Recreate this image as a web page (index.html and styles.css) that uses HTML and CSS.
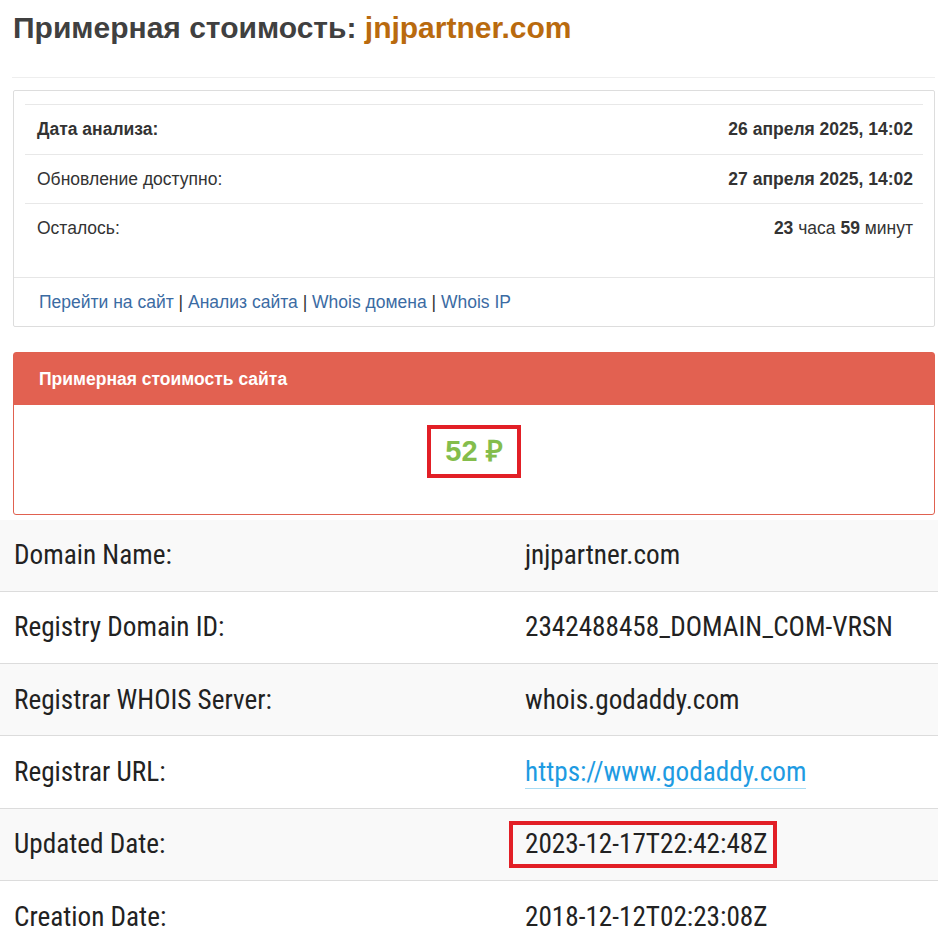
FILE: index.html
```html
<!DOCTYPE html>
<html lang="ru">
<head>
<meta charset="utf-8">
<title>Примерная стоимость: jnjpartner.com</title>
<link rel="stylesheet" href="styles.css">
</head>
<body>
<div class="top">
  <h1 class="title">Примерная стоимость: <span class="domain">jnjpartner.com</span></h1>
  <hr class="sep">
  <div class="box">
    <div class="box-body">
      <div class="row"><span class="b">Дата анализа:</span><span class="b">26 апреля 2025, 14:02</span></div>
      <div class="row"><span>Обновление доступно:</span><span class="b">27 апреля 2025, 14:02</span></div>
      <div class="row"><span>Осталось:</span><span><b>23</b> часа <b>59</b> минут</span></div>
    </div>
    <div class="box-footer">
      <a href="#">Перейти на сайт</a> | <a href="#">Анализ сайта</a> | <a href="#">Whois домена</a> | <a href="#">Whois IP</a>
    </div>
  </div>
  <div class="panel">
    <div class="panel-head">Примерная стоимость сайта</div>
    <div class="panel-body"><span class="price">52 ₽</span></div>
  </div>
</div>
<div class="whois">
  <div class="wrow odd"><div class="wl">Domain Name:</div><div class="wv">jnjpartner.com</div></div>
  <div class="wrow"><div class="wl">Registry Domain ID:</div><div class="wv">2342488458_DOMAIN_COM-VRSN</div></div>
  <div class="wrow odd"><div class="wl">Registrar WHOIS Server:</div><div class="wv">whois.godaddy.com</div></div>
  <div class="wrow"><div class="wl">Registrar URL:</div><div class="wv"><a class="wlink" href="#">https://www.godaddy.com</a></div></div>
  <div class="wrow odd"><div class="wl">Updated Date:</div><div class="wv"><span class="mark">2023-12-17T22:42:48Z</span></div></div>
  <div class="wrow"><div class="wl">Creation Date:</div><div class="wv">2018-12-12T02:23:08Z</div></div>
</div>
</body>
</html>
```
FILE: styles.css
```css
html, body {
  margin: 0;
  padding: 0;
  background: #fff;
}
body {
  font-family: "Liberation Sans", Arial, sans-serif;
  color: #333;
  overflow: hidden;
}
.top {
  padding: 0 3px 0 13px;
}
.title {
  margin: 11px 0 0;
  font-size: 30px;
  line-height: 1.1;
  font-weight: bold;
  color: #404040;
}
.domain {
  color: #b96a0e;
}
.sep {
  margin: 33px 0 12px -1px;
  border: 0;
  border-top: 1px solid #eee;
  height: 0;
}
.box {
  border: 1px solid #ddd;
  border-radius: 2px;
}
.box-body {
  padding: 13px 11px 24px;
}
.row {
  display: flex;
  justify-content: space-between;
  padding: 12px 10px 12px 12px;
  border-top: 1px solid #e8e8e8;
  font-size: 17.5px;
  line-height: 24.5px;
}
.b, .row b {
  font-weight: bold;
}
.box-footer {
  border-top: 1px solid #e6e6e6;
  padding: 12px 25px;
  font-size: 17.5px;
  line-height: 24px;
  color: #333;
}
.box-footer a {
  color: #3b6ba3;
  text-decoration: none;
}
.panel {
  margin-top: 25px;
  border: 1px solid #e06150;
  border-radius: 3px;
}
.panel-head {
  background: #e26151;
  color: #fff;
  font-weight: bold;
  font-size: 17.5px;
  height: 52px;
  line-height: 52px;
  padding-left: 25px;
}
.panel-body {
  height: 109px;
  box-sizing: border-box;
  padding-top: 20px;
  text-align: center;
}
.price {
  display: inline-block;
  border: 4px solid #e21f26;
  padding: 0 14px;
  height: 45px;
  line-height: 45px;
  font-size: 29px;
  font-weight: bold;
  color: #84bd4c;
}
.whois {
  margin-top: 5px;
  font-family: "Roboto Condensed", "Roboto", sans-serif;
  font-stretch: condensed;
  font-size: 27.2px;
  color: #222;
}
.wrow {
  display: grid;
  grid-template-columns: 511px 1fr;
  height: 71.3px;
  align-items: center;
  border-bottom: 1px solid #dcdcdc;
}
.wrow.odd {
  background: #f9f9f9;
}
.wl, .wv {
  padding-left: 14px;
}
.wlink {
  color: #1e9be2;
  text-decoration: none;
  border-bottom: 1px solid #a8dcf3;
}
.mark {
  display: inline-block;
  margin-left: -16px;
  padding: 0 6px 0 12px;
  border: 4px solid #e21f26;
  line-height: 39px;
}
```
